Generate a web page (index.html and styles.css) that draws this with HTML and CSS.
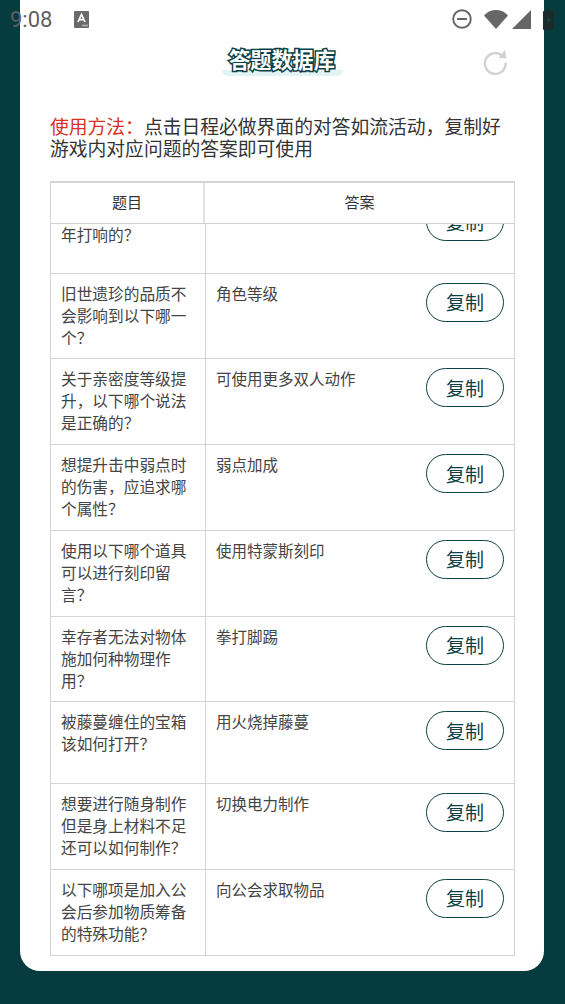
FILE: index.html
```html
<!DOCTYPE html>
<html lang="zh-CN">
<head>
    <meta charset="UTF-8">
    <meta name="viewport" content="width=device-width, initial-scale=1.0">
    <title>答题数据库</title>
    <link rel="stylesheet" href="styles.css">
</head>
<body>
    <div class="status-bar">
        <div class="status-left">
            <span class="status-time">9:08</span>
            <svg class="status-a" width="15" height="17" viewBox="0 0 15 17">
                <rect x="0" y="0" width="15" height="17" rx="1" fill="#6a6a6a"/>
                <path d="M4 11 L7.5 3.5 L11 11 M5.2 8.6 H9.8" fill="none" stroke="#fff" stroke-width="1.7"/>
                <path d="M8.5 14.5h1M10.5 14.5h1M12.5 14.5h1" stroke="#fff" stroke-width="1.4"/>
            </svg>
        </div>
        <div class="status-right">
            <svg width="20" height="20" viewBox="0 0 20 20">
                <circle cx="10" cy="10" r="8.8" fill="none" stroke="#666" stroke-width="1.9"/>
                <rect x="5" y="9" width="10" height="2" fill="#666"/>
            </svg>
            <svg class="status-wifi" width="24" height="19" viewBox="0 0 24 19">
                <path d="M0 5.5 C7 -1.8 17 -1.8 24 5.5 L12 19 Z" fill="#666"/>
            </svg>
            <svg class="status-signal" width="19" height="19" viewBox="0 0 19 19">
                <path d="M0 19 L19 0 V19 Z" fill="#666"/>
            </svg>
            <svg class="status-battery" width="11" height="21" viewBox="0 0 11 21">
                <path d="M3.5 0h4v2h2.5a1 1 0 0 1 1 1v17a1 1 0 0 1 -1 1h-9a1 1 0 0 1 -1 -1v-17a1 1 0 0 1 1 -1h2.5z" fill="#1d2a2c"/>
                <path d="M6.5 6 L3.5 12 H5.5 L4.5 16 L7.5 10 H5.5 Z" fill="#0a4a4e"/>
            </svg>
        </div>
    </div>

    <div class="card">
        <div class="card-head">
            <div class="title-wrap">
                <h1 class="title">答题数据库</h1>
            </div>
            <svg class="refresh" width="26" height="26" viewBox="0 0 26 26">
                <path d="M19.5 6.2 A10.4 10.4 0 1 0 23.6 13.5" fill="none" stroke="#d2d2d2" stroke-width="2.4"/>
                <path d="M16.5 8.7 L24.5 9.5 L23 0.8 Z" fill="#d2d2d2"/>
            </svg>
        </div>

        <p class="intro"><span class="intro-label">使用方法：</span>点击日程必做界面的对答如流活动，复制好游戏内对应问题的答案即可使用</p>

        <div class="table">
            <div class="table-head">
                <div class="head-q">题目</div>
                <div class="head-a">答案</div>
            </div>
            <div class="table-body">
                <div class="row row-clipped">
                    <div class="cell-q">年打响的？</div>
                    <div class="cell-a">
                        <span class="answer"></span>
                        <button class="copy">复制</button>
                    </div>
                </div>
                <div class="row">
                    <div class="cell-q">旧世遗珍的品质不会影响到以下哪一个？</div>
                    <div class="cell-a">
                        <span class="answer">角色等级</span>
                        <button class="copy">复制</button>
                    </div>
                </div>
                <div class="row">
                    <div class="cell-q">关于亲密度等级提升，以下哪个说法是正确的？</div>
                    <div class="cell-a">
                        <span class="answer">可使用更多双人动作</span>
                        <button class="copy">复制</button>
                    </div>
                </div>
                <div class="row">
                    <div class="cell-q">想提升击中弱点时的伤害，应追求哪个属性？</div>
                    <div class="cell-a">
                        <span class="answer">弱点加成</span>
                        <button class="copy">复制</button>
                    </div>
                </div>
                <div class="row">
                    <div class="cell-q">使用以下哪个道具可以进行刻印留言？</div>
                    <div class="cell-a">
                        <span class="answer">使用特蒙斯刻印</span>
                        <button class="copy">复制</button>
                    </div>
                </div>
                <div class="row">
                    <div class="cell-q">幸存者无法对物体施加何种物理作用？</div>
                    <div class="cell-a">
                        <span class="answer">拳打脚踢</span>
                        <button class="copy">复制</button>
                    </div>
                </div>
                <div class="row row-short">
                    <div class="cell-q">被藤蔓缠住的宝箱该如何打开？</div>
                    <div class="cell-a">
                        <span class="answer">用火烧掉藤蔓</span>
                        <button class="copy">复制</button>
                    </div>
                </div>
                <div class="row">
                    <div class="cell-q">想要进行随身制作但是身上材料不足还可以如何制作？</div>
                    <div class="cell-a">
                        <span class="answer">切换电力制作</span>
                        <button class="copy">复制</button>
                    </div>
                </div>
                <div class="row">
                    <div class="cell-q">以下哪项是加入公会后参加物质筹备的特殊功能？</div>
                    <div class="cell-a">
                        <span class="answer">向公会求取物品</span>
                        <button class="copy">复制</button>
                    </div>
                </div>
            </div>
        </div>
    </div>
</body>
</html>
```

FILE: styles.css
```css
* {
    box-sizing: border-box;
}
body {
    margin: 0;
    height: 1004px;
    overflow: hidden;
    background: #063b40;
    font-family: "Noto Sans CJK SC", "Noto Sans", sans-serif;
    color: #333;
}
.status-bar {
    position: absolute;
    top: 0;
    left: 0;
    width: 565px;
    height: 38px;
    display: flex;
    justify-content: space-between;
    align-items: center;
    padding: 0 11px 0 10px;
}
.status-left {
    display: flex;
    align-items: center;
    gap: 22px;
}
.status-time {
    font-family: Roboto, sans-serif;
    font-size: 22px;
    color: #5f5f5f;
}
.status-right {
    display: flex;
    align-items: center;
}
.status-wifi {
    margin-left: 12px;
}
.status-signal {
    margin-left: 4px;
}
.status-battery {
    margin-left: 12px;
}
.card {
    width: 524px;
    height: 971px;
    margin-left: 20px;
    padding: 0 30px;
    background: white;
    border-radius: 0 0 20px 20px;
}
.card-head {
    display: flex;
    justify-content: center;
    padding-top: 45px;
    height: 115px;
    position: relative;
}
.title-wrap {
    width: 121px;
    height: 31px;
    display: flex;
    justify-content: center;
    background: linear-gradient(#e2f3f6, #e2f3f6) no-repeat 0 25px / 100% 6px;
    border-radius: 0 0 6px 6px;
}
.title {
    margin: 0;
    font-size: 21.2px;
    line-height: 28px;
    font-weight: 700;
    white-space: nowrap;
    color: white;
    -webkit-text-stroke: 3px #0b4046;
    paint-order: stroke fill;
}
.refresh {
    position: absolute;
    top: 49px;
    right: 6px;
}
.intro {
    margin: 0 0 22px;
    width: 464px;
    font-size: 18.8px;
    line-height: 22px;
    color: #333;
}
.intro-label {
    color: #d9301f;
}
.table {
    width: 465px;
    border: 1px solid #d4d4d4;
    border-top-width: 2px;
}
.table-head {
    display: flex;
    height: 41px;
    border-bottom: 1px solid #cfcfcf;
    font-size: 15px;
    line-height: 38px;
    text-align: center;
}
.head-q {
    width: 154px;
    border-right: 2px solid #e2e2e2;
}
.head-a {
    flex: 1;
}
.table-body {
    height: 731px;
    overflow: hidden;
}
.row {
    display: flex;
    height: 85.75px;
    border-bottom: 1px solid #d4d4d4;
    font-size: 15.5px;
    line-height: 22px;
}
.row:last-child {
    border-bottom: 0;
}
.row-short {
    height: 81.5px;
}
.row-clipped {
    height: 85.5px;
    margin-top: -36px;
}
.row-clipped .cell-q {
    padding-top: 36px;
}
.row-clipped .cell-a {
    padding-top: 0;
}
.row-clipped .copy {
    margin-top: 14px;
}
.cell-q {
    width: 155px;
    padding: 9px 14px 0 10px;
    font-size: 15.7px;
    border-right: 1px solid #d0d0d0;
    color: #444;
}
.cell-a {
    flex: 1;
    display: flex;
    justify-content: space-between;
    align-items: flex-start;
    padding: 9px 10px 0;
    color: #444;
}
.answer {
    margin-top: -1px;
}
.copy {
    width: 78px;
    height: 39px;
    padding: 0;
    background: white;
    border: 1px solid #0b4046;
    border-radius: 20px;
    font-family: inherit;
    font-size: 19px;
    line-height: 36px;
    color: #0b4046;
}
```
